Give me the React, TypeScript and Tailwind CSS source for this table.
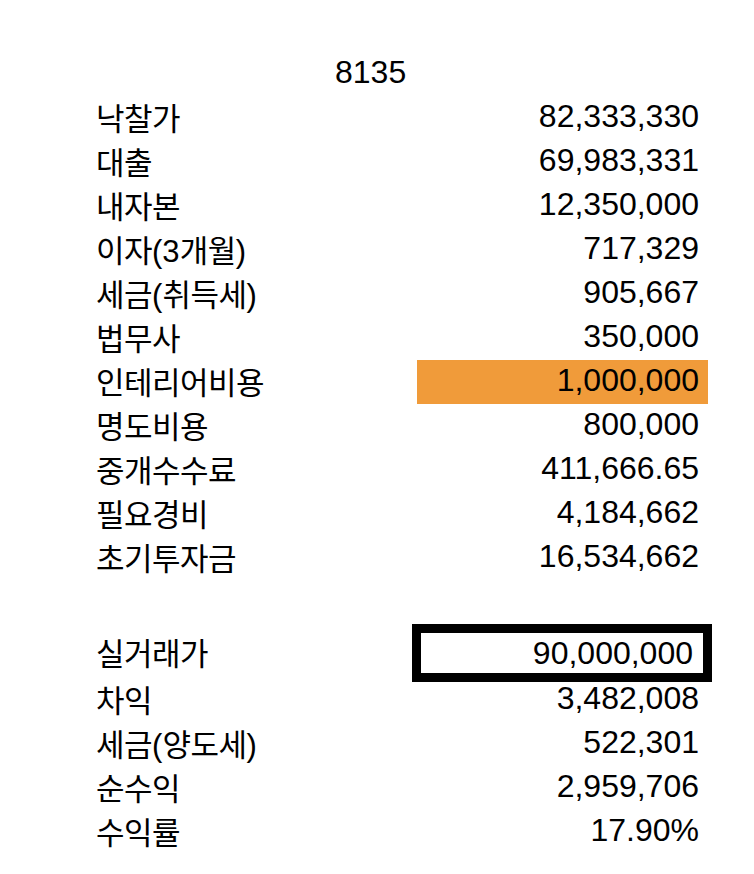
import React from "react";

const topRows = [
  { label: "낙찰가", value: "82,333,330" },
  { label: "대출", value: "69,983,331" },
  { label: "내자본", value: "12,350,000" },
  { label: "이자(3개월)", value: "717,329" },
  { label: "세금(취득세)", value: "905,667" },
  { label: "법무사", value: "350,000" },
  { label: "인테리어비용", value: "1,000,000", highlight: true },
  { label: "명도비용", value: "800,000" },
  { label: "중개수수료", value: "411,666.65" },
  { label: "필요경비", value: "4,184,662" },
  { label: "초기투자금", value: "16,534,662" },
];

const bottomRows = [
  { label: "차익", value: "3,482,008" },
  { label: "세금(양도세)", value: "522,301" },
  { label: "순수익", value: "2,959,706" },
  { label: "수익률", value: "17.90%" },
];

const labelCls =
  "w-[321px] shrink-0 pt-[2px] leading-none text-black font-['Liberation_Sans','Noto_Sans_CJK_KR',sans-serif] whitespace-nowrap";
const valueCls =
  "flex w-[291px] h-full shrink-0 items-center justify-end pr-[9px] pb-[4px] text-[32px] leading-none text-black font-['Liberation_Sans',Arial,sans-serif]";

// hangul runs get their own size/tracking to match the reference face; brackets and digits stay normal
function Label({ text }: { text: string }) {
  const parts = text.match(/[가-힣]+|[^가-힣]+/g) || [];
  return (
    <div className={labelCls}>
      {parts.map((p, i) =>
        /[가-힣]/.test(p) ? (
          <span key={i} className="text-[31px] tracking-[-0.5px]">{p}</span>
        ) : (
          <span key={i} className="text-[31px] tracking-normal">{p}</span>
        )
      )}
    </div>
  );
}

function Row({ label, value, highlight }: { label: string; value: string; highlight?: boolean }) {
  return (
    <div className="flex h-[44px] items-center">
      <Label text={label} />
      <div className={`${valueCls} ${highlight ? "bg-[#f09b3a]" : ""}`}>{value}</div>
    </div>
  );
}

export default function App() {
  return (
    <div className="min-h-[874px] w-[754px] bg-white pl-[96px] pt-[52px]">
      <div className="flex h-[44px] items-center pl-[239px] pb-[4px] text-[32px] leading-none text-black font-['Liberation_Sans',Arial,sans-serif]">
        8135
      </div>

      {topRows.map((r) => (
        <Row key={r.label} {...r} />
      ))}

      <div className="h-[48px]" />

      <div className="flex h-[50px] items-center">
        <Label text="실거래가" />
        <div className="h-full w-[291px] shrink-0">
          <div className="-ml-[5px] -mt-[4px] flex h-[58px] w-[300px] items-center justify-end border-[9px] border-black bg-white pr-[10px] text-[32px] leading-none text-black font-['Liberation_Sans',Arial,sans-serif]">
            90,000,000
          </div>
        </div>
      </div>

      {bottomRows.map((r) => (
        <Row key={r.label} {...r} />
      ))}
    </div>
  );
}
